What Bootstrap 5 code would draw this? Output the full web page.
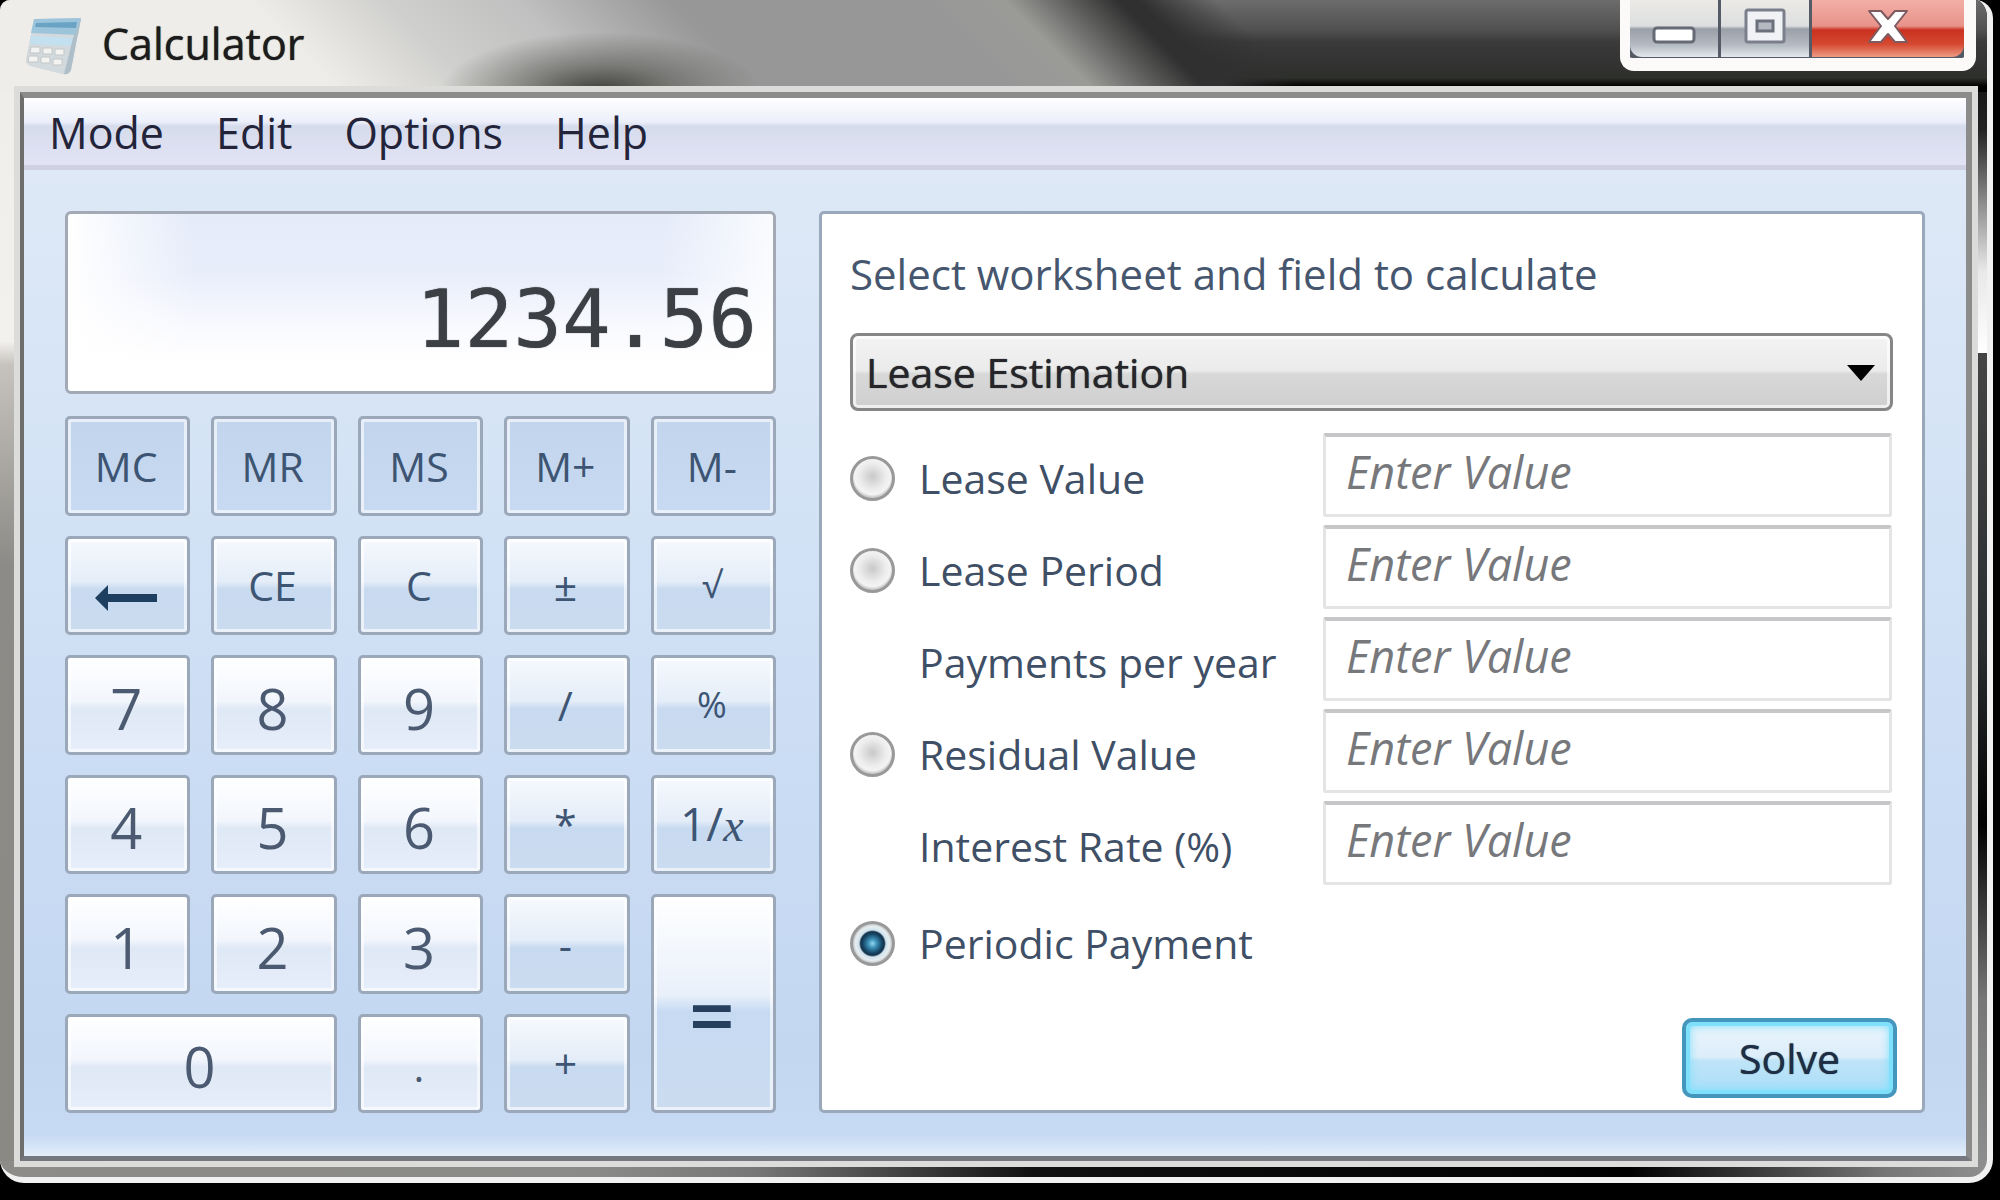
<!DOCTYPE html>
<html lang="en">
<head>
<meta charset="utf-8">
<meta name="viewport" content="width=device-width, initial-scale=1">
<title>Calculator</title>
<link href="https://cdn.jsdelivr.net/npm/bootstrap@5.3.0/dist/css/bootstrap.min.css" rel="stylesheet">
<style>
  body { background: #000; font-family: "Open Sans", "Noto Sans", sans-serif; font-size: 41px; line-height: 48px; color: #3f4f66; }

  /* Window frame */
  .aero-window {
    min-height: calc(100vh - 17px); margin: 0 7px 17px 0; padding: 0 15px 16px 20px;
    border: solid #f1f1f1; border-width: 0 6px 6px 0; border-radius: 10px 18px 24px 24px; overflow: hidden;
    background:
      linear-gradient(90deg, #8d8c88 0, #8a8a88 30%, #777 38%, #111 52%, #000 82%, #777 95%, #8f8f8f 100%) bottom / 100% 16px no-repeat,
      linear-gradient(180deg, #000 0, #222 11%, #888 17%, #e8e8e8 23%, #fff 30%, #444 30%, #2a2e31 55%, #000 70%, #777 85%, #8d8f90 100%) right / 16px 100% no-repeat,
      linear-gradient(180deg, #efede9 0, #f3f1ee 29%, #c6c3be 31%, #8d8b87 48%, #8b8984 100%);
  }
  .aero-title {
    height: 92px; margin: 0 -15px 0 -20px; padding-left: 22px;
    background:
      radial-gradient(ellipse 160px 60px at 600px 100%, rgba(45,45,40,.9), rgba(60,60,55,.5) 45%, transparent 100%),
      linear-gradient(45deg, #efede9 0, #efede9 240px, #cfcfcd 340px, #c0c0c0 430px, #979797 540px, #979797 720px, #9b9c98 775px, #303030 855px, #303030 870px, transparent 925px),
      linear-gradient(180deg, #6c6c6c 0, #505050 30px, #3a3a3a 42px, #343434 60px, #2e302c 78px, #000 86px);
  }
  .app-icon { width: 60px; height: 68px; }
  .app-name { font-size: 43px; line-height: 56px; color: #1c1c1c; text-shadow: 0 0 1px #1c1c1c; }

  .caption-set { height: 71px; margin-right: 11px; border: solid #fbfaf8; border-width: 0 12px 13px 10px; border-radius: 0 0 14px 14px; background: #555b66; gap: 3px; }
  .caption-set button { height: 57px; width: 88px; border: 0; padding: 0; background: linear-gradient(180deg, #eceae6 0, #dcdedf 26px, #9a9fa8 29px, #b4bac2 45px, #e4e9ee 57px); }
  .caption-set button:first-child { border-bottom-left-radius: 12px; }
  .caption-set .close-key { width: 152px; border-bottom-right-radius: 12px; background: linear-gradient(180deg, #f2aea6 0, #e89389 26px, #c93120 30px, #d5482f 44px, #ee9a84 57px); }
  .caption-set svg { display: block; margin: auto; }

  .client-area { border: 6px solid #8c8c8c; border-left: 4px solid #6e6e6e; border-bottom: 5px solid #75797f; box-shadow: 0 0 0 6px #dcdcda; background: linear-gradient(180deg, #e1eaf7 0, #dbe7f6 15%, #cfe0f5 50%, #c3d7f1 90%, #c6daf3 98%, #e2edf9 100%); }

  .menu-strip { height: 72px; padding: 2px 25px 0; gap: 52px; border-bottom: 5px solid #cfd1e3; background: linear-gradient(180deg, #fff 0, #f8f9fe 8px, #eceffa 24px, #d6dcec 28px, #dbdff0 44px, #e2e3f5 66px); }
  .menu-strip a { font-size: 43px; color: #23243a; text-decoration: none; }

  /* Two panes */
  .panes { display: grid; grid-template-columns: 9fr 14fr; gap: 43px; padding: 41px 41px 43px 41px; }
  .readout { height: 183px; border: 3px solid #a3aab6; border-radius: 6px; padding: 0 16px; margin-bottom: 22px; text-align: right;
    font-family: "DejaVu Sans Mono", monospace; font-size: 81px; line-height: 96px; color: #3c4045; text-shadow: 0 0 1px #3c4045;
    background: linear-gradient(90deg, #fff 0, transparent 18%, transparent 84%, rgba(255,255,255,.8) 100%), linear-gradient(180deg, #e4ebf9 0, #e9eefb 35%, #f8f9fe 62%, #fff 85%); }

  .keypad { display: grid; grid-template-columns: repeat(5, 1fr); grid-template-rows: repeat(6, 1fr); gap: 20px 21px; }
  .keypad button { min-width: 0; padding: 0 3px 0 0; border: 3px solid #9ba8ba; border-radius: 5px; box-shadow: inset 0 0 0 3px rgba(255,255,255,.6); color: #3d5573; font-size: 41px; line-height: 48px;
    background: linear-gradient(180deg, #f6f9fd 0, #e4edf8 46%, #c8daf0 54%, #cbdcf0 100%); }
  .keypad .mem-key { background: linear-gradient(180deg, #c2d5ec, #c8daf2); }
  .keypad .num-key { padding-top: 6px; font-size: 56px; line-height: 64px; color: #4b5a70; background: linear-gradient(180deg, #fff 0, #f2f6fc 46%, #dfe8f5 54%, #e5eef9 100%); }
  .keypad .point-key { font-size: 41px; }
  .keypad .sign-key { font-size: 36px; }
  .keypad .equals-key { grid-row: span 2; padding-top: 20px; font-size: 80px; line-height: 80px; font-weight: 600; color: #263f5f; background: linear-gradient(180deg, #fff 0, #e9f0fa 46%, #c6daf2 54%, #cbdcf0 100%); }
  .keypad .wide-key { grid-column: span 2; }
  .keypad .inverse-key { font-size: 46px; }
  .keypad em { font-family: "Liberation Serif", serif; }
  .key-arrow { width: 64px; height: 28px; margin-top: 20px; }

  .worksheet { border: 3px solid #9aa8bb; border-radius: 5px; background: #fff; padding: 36px 25px 12px 28px; }
  .worksheet h1 { font-size: 42px; line-height: 48px; font-weight: 400; color: #46566e; margin-bottom: 35px; }
  .worksheet .form-select { height: 78px; margin-right: 4px; padding: 0 60px 0 13px; border: 3px solid #868686; border-radius: 8px; box-shadow: inset 0 0 0 3px rgba(255,255,255,.65); font-size: 41px; line-height: 48px; font-weight: 500; color: #26262a; width: auto; text-shadow: 0 0 1px #26262a;
    background: linear-gradient(180deg, #f3f3f3 0, #ebebeb 48%, #d8d8d8 53%, #cfcfcf 100%); }
  .select-wrap { position: relative; display: grid; }
  .select-wrap svg { position: absolute; right: 22px; top: 32px; width: 28px; height: 16px; pointer-events: none; }

  .field-rows { display: grid; grid-template-columns: 473fr 569fr; grid-auto-rows: 84px; row-gap: 8px; margin: 22px 5px 0 0; }
  .field-rows .form-check { display: flex; align-items: center; gap: 24px; margin: 0; padding: 6px 0 0; }
  .field-rows .unmarked { padding: 6px 0 0 69px; display: flex; align-items: center; }
  .field-rows .form-check-input { flex: none; float: none; margin: 0; width: 45px; height: 45px; border: 3px solid #999; background: radial-gradient(circle at 50% 45%, #c9c9c9 0, #ececec 45%, #f4f4f4 62%, #cfcfcf 70%); }
  .field-rows .form-check-input:checked { background: radial-gradient(circle at 50% 50%, #8fd6ef 0, #3c8fb8 16%, #14415f 36%, #16334c 43%, #cfe3ee 49%, #e6ecef 62%, #c4c8cb 70%); }
  .field-rows .form-control { height: 84px; border: 3px solid #e4e4e6; border-top: 4px solid #c6c6c9; border-radius: 3px; padding: 0 20px 8px; font-size: 45px; line-height: 56px; font-style: italic; background: #fff; }
  .field-rows .form-control::placeholder { color: #77787b; opacity: 1; }
  .field-rows .last-row { padding-top: 16px; }

  .solve-key { width: 215px; height: 80px; padding: 0; border: 4px solid #4596bd; border-radius: 10px; font-size: 41px; line-height: 48px; font-weight: 500; color: #1e2e44; text-shadow: 0 0 1px #1e2e44;
    box-shadow: inset 0 0 0 4px #7fe0fb, inset 0 0 8px 4px #7fe0fb; background: linear-gradient(180deg, #e9f4fc 0, #ddeefa 48%, #bfe4f8 54%, #a9def8 100%); }
</style>
</head>
<body>
<div class="aero-window d-flex flex-column">
  <header class="aero-title d-flex align-items-start">
    <svg class="app-icon mt-2" viewBox="0 0 60 68" aria-hidden="true">
      <path d="M12 11 L59 10 L49 62 Q47 67 40 66 L8 58 Q3 56 4 51 Z" fill="#d3dadd"/>
      <path d="M12 11 L59 10 L56 27 L9 25 Z" fill="#9cc5dc"/>
      <path d="M14 15 L55 14 L54 20 L13 19 Z" fill="#6ba3c4"/>
      <path d="M9 28 L55 30 L52 38 L8 36 Z" fill="#c2e0ef"/>
      <g fill="#f3f3f1" stroke="#c3c7c9" stroke-width="1"><path d="M9 39h9v6H8zM21 40h9v6h-9zM33 41h9v6h-9zM7 48h9v6H6zM19 49h9v6h-9zM31 51h9v6h-9z"/></g>
      <path d="M59 10 L49 62 Q47 67 42 66 L51 30 Z" fill="#aebfca"/>
    </svg>
    <div class="app-name ms-3 mt-3 ps-1">Calculator</div>
    <div class="caption-set d-flex ms-auto">
      <button type="button" aria-label="Minimize"><svg width="46" height="57" viewBox="0 0 46 57"><rect x="3" y="28" width="40" height="14" rx="3" fill="#fff" stroke="#656a76" stroke-width="3"/></svg></button>
      <button type="button" aria-label="Maximize"><svg width="46" height="57" viewBox="0 0 46 57"><rect x="4" y="10" width="38" height="32" rx="2" fill="#f1f2f5" stroke="#7a7f8b" stroke-width="3"/><rect x="15" y="21" width="16" height="10" fill="#b5b8c0" stroke="#6b707c" stroke-width="3"/></svg></button>
      <button type="button" class="close-key" aria-label="Close"><svg width="46" height="57" viewBox="0 0 46 57"><path d="M4 11h12l7 8 7-8h12L30 26l12 16H30l-7-8-7 8H4l12-16z" fill="#fff" stroke="#7d5b60" stroke-width="2" stroke-linejoin="round"/></svg></button>
    </div>
  </header>

  <main class="client-area flex-fill d-flex flex-column">
    <nav class="menu-strip d-flex align-items-center" aria-label="Menu">
      <a href="#">Mode</a><a href="#">Edit</a><a href="#">Options</a><a href="#">Help</a>
    </nav>
    <div class="panes flex-fill">
      <section class="d-flex flex-column">
        <output class="readout d-flex flex-column justify-content-center"><span class="mt-4 pt-2">1234.56</span></output>
        <div class="keypad flex-fill">
          <button type="button" class="mem-key">MC</button><button type="button" class="mem-key">MR</button><button type="button" class="mem-key">MS</button><button type="button" class="mem-key">M+</button><button type="button" class="mem-key">M-</button>
          <button type="button" aria-label="Backspace"><svg class="key-arrow" viewBox="0 0 64 28"><path d="M1 14 L14 1 L14 10 L63 10 L63 18 L14 18 L14 27 Z" fill="#1f3f60"/></svg></button><button type="button">CE</button><button type="button">C</button><button type="button">±</button><button type="button" class="sign-key">√</button>
          <button type="button" class="num-key">7</button><button type="button" class="num-key">8</button><button type="button" class="num-key">9</button><button type="button">/</button><button type="button" class="sign-key">%</button>
          <button type="button" class="num-key">4</button><button type="button" class="num-key">5</button><button type="button" class="num-key">6</button><button type="button">*</button><button type="button" class="inverse-key">1/<em>x</em></button>
          <button type="button" class="num-key">1</button><button type="button" class="num-key">2</button><button type="button" class="num-key">3</button><button type="button">-</button><button type="button" class="equals-key">=</button>
          <button type="button" class="num-key wide-key">0</button><button type="button" class="num-key point-key">.</button><button type="button">+</button>
        </div>
      </section>

      <form class="worksheet d-flex flex-column">
        <h1><label for="sheet">Select worksheet and field to calculate</label></h1>
        <div class="select-wrap">
          <select class="form-select" id="sheet"><option>Lease Estimation</option></select>
          <svg viewBox="0 0 28 16" aria-hidden="true"><path d="M0 0h28L14 16z" fill="#000"/></svg>
        </div>
        <div class="field-rows">
          <div class="form-check"><input class="form-check-input" type="radio" name="solve" id="r1"><label for="r1">Lease Value</label></div>
          <input class="form-control" type="text" placeholder="Enter Value" aria-label="Lease Value">
          <div class="form-check"><input class="form-check-input" type="radio" name="solve" id="r2"><label for="r2">Lease Period</label></div>
          <input class="form-control" type="text" placeholder="Enter Value" aria-label="Lease Period">
          <label class="unmarked" for="ppy">Payments per year</label>
          <input class="form-control" type="text" id="ppy" placeholder="Enter Value">
          <div class="form-check"><input class="form-check-input" type="radio" name="solve" id="r3"><label for="r3">Residual Value</label></div>
          <input class="form-control" type="text" placeholder="Enter Value" aria-label="Residual Value">
          <label class="unmarked" for="rate">Interest Rate (%)</label>
          <input class="form-control" type="text" id="rate" placeholder="Enter Value">
          <div class="form-check last-row"><input class="form-check-input" type="radio" name="solve" id="r4" checked><label for="r4">Periodic Payment</label></div>
        </div>
        <button type="button" class="solve-key align-self-end mt-auto">Solve</button>
      </form>
    </div>
  </main>
</div>
<script src="https://cdn.jsdelivr.net/npm/bootstrap@5.3.0/dist/js/bootstrap.bundle.min.js"></script>
</body>
</html>
